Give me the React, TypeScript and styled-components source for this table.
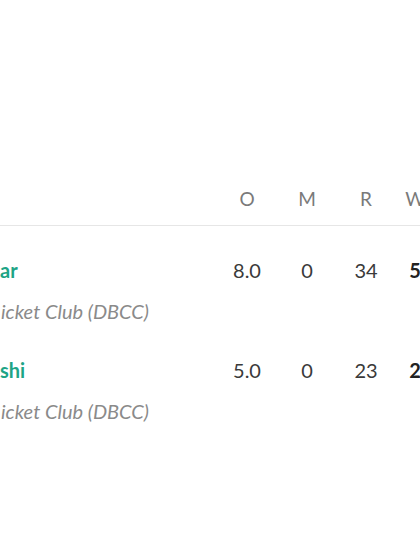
import styled, { createGlobalStyle } from "styled-components";

const GlobalStyle = createGlobalStyle`
    html, body {
        margin: 0;
        padding: 0;
        background: #ffffff;
        overflow: hidden;
    }
    body {
        font-family: Lato, "Open Sans", "Noto Sans", sans-serif;
    }
`

const Page = styled.div`
    width: 420px;
    height: 560px;
    overflow: hidden;
`

const Table = styled.div`
    width: 435px;
    margin-top: 180px;
`

const Row = styled.div`
    display: grid;
    grid-template-columns: 1fr 60px 60px 58px 40px;
    align-items: start;
`

const HeaderRow = styled(Row)`
    padding: 8px 0 15px;
    border-bottom: 1px solid #e6e6e6;
`

const Body = styled.div`
    padding-top: 15px;
`

const BowlerRow = styled(Row)`
    padding: 17px 0 18px;
`

const HeadCell = styled.div`
    font-size: 19px;
    line-height: 22px;
    font-weight: 400;
    color: #7a7a7a;
    text-align: center;
`

const StatCell = styled.div<{ $bold?: boolean }>`
    font-size: 20px;
    line-height: 24px;
    color: ${(p) => (p.$bold ? "#222222" : "#3a3a3a")};
    font-weight: ${(p) => (p.$bold ? 700 : 400)};
    text-align: center;
`

const Bowler = styled.div`
    display: flex;
    flex-direction: column;
    gap: 17px;
`

const Name = styled.div`
    font-size: 20px;
    line-height: 24px;
    font-weight: 700;
    color: #1ea486;
`

const Team = styled.div`
    font-size: 20px;
    line-height: 24px;
    font-style: italic;
    color: #8a8a8a;
    padding-left: 1px;
`

const bowlers = [
    { name: "ar", team: "icket Club (DBCC)", overs: "8.0", maidens: 0, runs: 34, wickets: 5 },
    { name: "shi", team: "icket Club (DBCC)", overs: "5.0", maidens: 0, runs: 23, wickets: 2 },
];

const App = () => {
    return (
        <Page>
            <GlobalStyle />
            <Table>
                <HeaderRow>
                    <div></div>
                    <HeadCell>O</HeadCell>
                    <HeadCell>M</HeadCell>
                    <HeadCell>R</HeadCell>
                    <HeadCell>W</HeadCell>
                </HeaderRow>
                <Body>
                    {bowlers.map((b) => (
                        <BowlerRow key={b.name}>
                            <Bowler>
                                <Name>{b.name}</Name>
                                <Team>{b.team}</Team>
                            </Bowler>
                            <StatCell>{b.overs}</StatCell>
                            <StatCell>{b.maidens}</StatCell>
                            <StatCell>{b.runs}</StatCell>
                            <StatCell $bold>{b.wickets}</StatCell>
                        </BowlerRow>
                    ))}
                </Body>
            </Table>
        </Page>
    );
};

export default App;
